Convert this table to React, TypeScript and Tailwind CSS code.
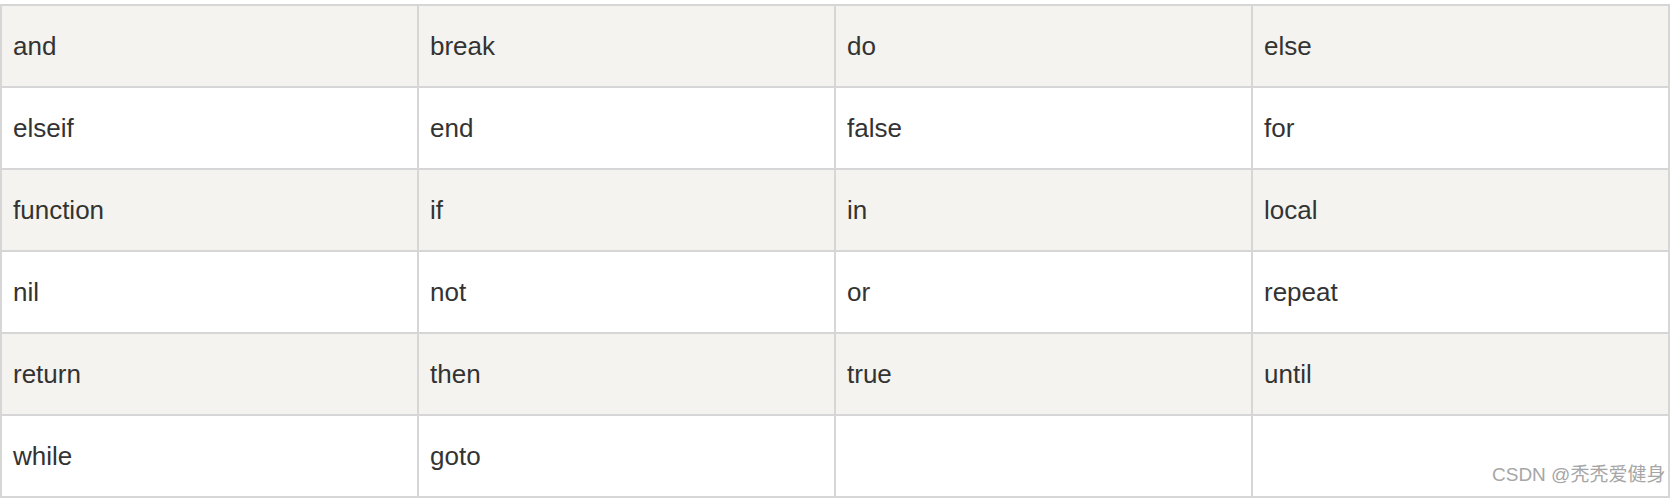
const rows: string[][] = [
  ["and", "break", "do", "else"],
  ["elseif", "end", "false", "for"],
  ["function", "if", "in", "local"],
  ["nil", "not", "or", "repeat"],
  ["return", "then", "true", "until"],
  ["while", "goto", "", ""],
];

export default function App() {
  return (
    <div className="relative w-[1678px] h-[502px] bg-white pt-[4px]">
      <div className="grid grid-cols-4 gap-[2px] bg-[#d6d6d6] p-[2px] w-[1670px]">
        {rows.map((row, i) =>
          row.map((word, j) => (
            <div
              key={`${i}-${j}`}
              className={`h-[80px] flex items-center pl-[11px] text-[26px] text-[#333333] font-['Liberation_Sans',Arial,sans-serif] ${
                i % 2 === 0 ? "bg-[#f4f3ef]" : "bg-white"
              }`}
            >
              {word}
            </div>
          ))
        )}
      </div>
      <div className="absolute left-[1492px] top-[465px] text-[19px] leading-none text-[#a6a6a6] font-['Liberation_Sans','Noto_Sans_CJK_SC',sans-serif]">
        CSDN @秃秃爱健身
      </div>
    </div>
  );
}
